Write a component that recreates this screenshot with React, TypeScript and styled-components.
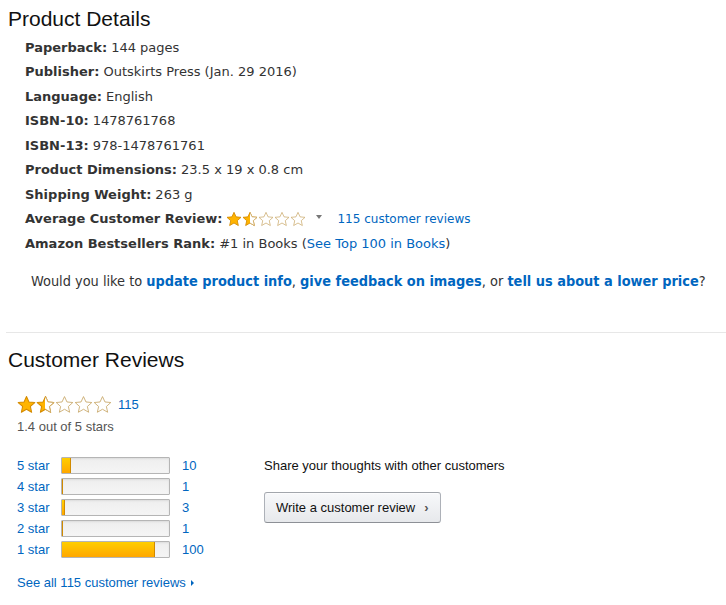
import React from "react";
import styled, { createGlobalStyle } from "styled-components";

const Global = createGlobalStyle`
  html, body { margin: 0; padding: 0; background: #fff; }
  body { font-family: "Liberation Sans", Arial, sans-serif; color: #111; }
`;

const Page = styled.div`
  width: 726px;
  padding: 4px 0 0 8px;
  box-sizing: border-box;
`;

const Heading = styled.h2`
  margin: 0;
  font-family: "Liberation Sans", Arial, sans-serif;
  font-weight: 400;
  font-size: 21px;
  line-height: 30px;
  color: #111;
`;

const DetailList = styled.ul`
  list-style: none;
  margin: 1px 0 0;
  padding: 0 0 0 17px;
  font-family: "DejaVu Sans", Verdana, sans-serif;
  font-size: 13px;
  color: #333;
`;

const DetailItem = styled.li`
  display: flex;
  align-items: center;
  height: 24.5px;
  white-space: nowrap;
`;

const Label = styled.b`
  font-weight: 700;
  margin-right: 4px;
`;

const Link = styled.a<{ $bold?: boolean; $small?: boolean }>`
  color: #0066c0;
  text-decoration: none;
  font-weight: ${(p) => (p.$bold ? 700 : 400)};
  font-size: ${(p) => (p.$small ? "12px" : "inherit")};
  cursor: pointer;
`;

const Caret = styled.span`
  display: inline-block;
  width: 0;
  height: 0;
  border-left: 3.5px solid transparent;
  border-right: 3.5px solid transparent;
  border-top: 4px solid #777;
  margin: 0 15px 3px 10px;
`;

const Feedback = styled.p`
  margin: 17px 0 0 23px;
  font-family: "DejaVu Sans Condensed", Tahoma, sans-serif;
  font-size: 14.4px;
  line-height: 16px;
  color: #333;
  white-space: nowrap;
`;

const Rule = styled.hr`
  border: 0;
  border-top: 1px solid #e7e7e7;
  margin: 43px 0 0 -2px;
`;

const ReviewsHeading = styled(Heading)`
  margin-top: 12px;
`;

const ReviewsBody = styled.div`
  display: flex;
  padding: 0 0 0 9px;
  font-family: "Liberation Sans", Arial, sans-serif;
  font-size: 13px;
`;

const LeftCol = styled.div`
  width: 247px;
`;

const RightCol = styled.div`
  padding-top: 83px;
`;

const StarRow = styled.div`
  display: flex;
  align-items: center;
  gap: 6px;
  margin-top: 20px;
  height: 20px;
`;

const Stars = styled.span<{ $gap: number }>`
  display: inline-flex;
  gap: ${(p) => p.$gap}px;
  vertical-align: middle;
`;

const Muted = styled.div`
  color: #555;
  line-height: 16px;
  margin-top: 4px;
`;

const Histogram = styled.div`
  margin-top: 22px;
  display: grid;
  grid-template-columns: 44px 109px auto;
  row-gap: 4px;
  align-items: center;
`;

const RowLabel = styled.a`
  color: #0066c0;
  text-decoration: none;
  line-height: 17px;
`;

const Count = styled(RowLabel)`
  padding-left: 12px;
`;

const Bar = styled.div`
  height: 17px;
  box-sizing: border-box;
  border: 1px solid #b5b5b5;
  border-radius: 1px;
  background: linear-gradient(to bottom, #eeeeee, #f5f5f5);
  box-shadow: inset 0 1px 2px rgba(0, 0, 0, 0.08);
  overflow: hidden;
  display: flex;
`;

const Fill = styled.div`
  margin: -1px 0 0 -1px;
  box-sizing: border-box;
  border: 1px solid #d08a00;
  border-radius: 1px;
  background: linear-gradient(to bottom, #ffce00, #ffa700);
  height: calc(100% + 2px);
`;

const SeeAll = styled.a`
  display: inline-flex;
  align-items: center;
  gap: 5px;
  margin-top: 17px;
  color: #0066c0;
  text-decoration: none;
  line-height: 16px;
`;

const Tri = styled.span`
  display: inline-block;
  width: 0;
  height: 0;
  border-top: 3px solid transparent;
  border-bottom: 3px solid transparent;
  border-left: 3px solid #0066c0;
`;

const ShareText = styled.div`
  color: #111;
  line-height: 16px;
`;

const Button = styled.button`
  margin-top: 18px;
  height: 31px;
  padding: 0 11px;
  display: inline-flex;
  align-items: center;
  gap: 9px;
  font-family: "Liberation Sans", Arial, sans-serif;
  font-size: 13px;
  color: #111;
  background: linear-gradient(to bottom, #f7f8fa, #e7e9ec);
  border: 1px solid #adb1b8;
  border-top-color: #a2a6ac;
  border-bottom-color: #8d9096;
  border-radius: 3px;
  box-shadow: inset 0 1px 0 rgba(255, 255, 255, 0.6);
  cursor: pointer;
`;

const Chevron = styled.span`
  font-weight: 700;
  font-size: 13px;
  color: #555;
`;

let uid = 0;
function Star({ fill, size }: { fill: number; size: number }) {
  const id = React.useMemo(() => `sg${uid++}`, []);
  const pts = "12,1.5 15.1,8.3 22.5,9 16.9,14 18.5,21.3 12,17.5 5.5,21.3 7.1,14 1.5,9 8.9,8.3";
  return (
    <svg width={size} height={size} viewBox="0 0 24 23">
      <defs>
        <linearGradient id={id} x1="0" x2="1" y1="0" y2="0">
          <stop offset={fill} stopColor="#ffb400" />
          <stop offset={fill} stopColor="#ffffff" />
        </linearGradient>
        <clipPath id={`${id}c`}>
          <rect x={24 * fill} y="0" width="24" height="23" />
        </clipPath>
      </defs>
      <polygon
        points={pts}
        fill={`url(#${id})`}
        stroke={fill > 0 ? "#d48a00" : "#c9a86a"}
        strokeWidth={fill > 0 ? 1.3 : 1.1}
        strokeLinejoin="round"
      />
      {fill > 0 && fill < 1 && (
        <polygon
          points={pts}
          fill="#fff"
          stroke="#c9a86a"
          strokeWidth={1.1}
          strokeLinejoin="round"
          clipPath={`url(#${id}c)`}
        />
      )}
    </svg>
  );
}

function StarRating({ size, gap }: { size: number; gap: number }) {
  const fills = [1, 0.5, 0, 0, 0];
  return (
    <Stars $gap={gap}>
      {fills.map((f, i) => (
        <Star key={i} fill={f} size={size} />
      ))}
    </Stars>
  );
}

const details: [string, string][] = [
  ["Paperback:", "144 pages"],
  ["Publisher:", "Outskirts Press (Jan. 29 2016)"],
  ["Language:", "English"],
  ["ISBN-10:", "1478761768"],
  ["ISBN-13:", "978-1478761761"],
  ["Product Dimensions:", "23.5 x 19 x 0.8 cm"],
  ["Shipping Weight:", "263 g"],
];

const histogram = [
  { label: "5 star", count: 10 },
  { label: "4 star", count: 1 },
  { label: "3 star", count: 3 },
  { label: "2 star", count: 1 },
  { label: "1 star", count: 100 },
];

export default function App() {
  const total = 115;
  return (
    <Page>
      <Global />
      <Heading>Product Details</Heading>
      <DetailList>
        {details.map(([k, v]) => (
          <DetailItem key={k}>
            <Label>{k}</Label>
            {v}
          </DetailItem>
        ))}
        <DetailItem>
          <Label>Average Customer Review:</Label>
          <StarRating size={16} gap={0} />
          <Caret />
          <Link $small>115 customer reviews</Link>
        </DetailItem>
        <DetailItem>
          <Label>Amazon Bestsellers Rank:</Label>
          #1 in Books (<Link>See Top 100 in Books</Link>)
        </DetailItem>
      </DetailList>
      <Feedback>
        Would you like to <Link $bold>update product info</Link>,{" "}
        <Link $bold>give feedback on images</Link>, or{" "}
        <Link $bold>tell us about a lower price</Link>?
      </Feedback>
      <Rule />
      <ReviewsHeading>Customer Reviews</ReviewsHeading>
      <ReviewsBody>
        <LeftCol>
          <StarRow>
            <StarRating size={19} gap={0} />
            <Link>115</Link>
          </StarRow>
          <Muted>1.4 out of 5 stars</Muted>
          <Histogram>
            {histogram.map((h) => (
              <React.Fragment key={h.label}>
                <RowLabel>{h.label}</RowLabel>
                <Bar>
                  <Fill style={{ width: `calc(${(h.count / total) * 100}% + 1px)` }} />
                </Bar>
                <Count>{h.count}</Count>
              </React.Fragment>
            ))}
          </Histogram>
          <SeeAll>
            See all 115 customer reviews <Tri />
          </SeeAll>
        </LeftCol>
        <RightCol>
          <ShareText>Share your thoughts with other customers</ShareText>
          <Button>
            Write a customer review <Chevron>›</Chevron>
          </Button>
        </RightCol>
      </ReviewsBody>
    </Page>
  );
}
